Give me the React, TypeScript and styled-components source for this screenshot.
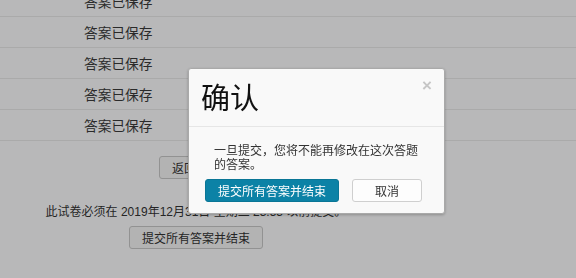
import React from "react";
import styled, { createGlobalStyle } from "styled-components";

const Global = createGlobalStyle`
  html, body { margin: 0; padding: 0; background: #fff; overflow: hidden; }
  body { font-family: "Liberation Sans", "Noto Sans CJK SC", sans-serif; font-size: 12px; color: #333; }
`;

const Page = styled.div`
  width: 576px;
  height: 278px;
  overflow: hidden;
  background: #fdfdfe;
`;

const Summary = styled.div`
  margin-top: -14px;
  display: flex;
  flex-direction: column;
`;

const Row = styled.div`
  height: 31px;
  display: flex;
  align-items: center;
  padding-left: 84px;
  border-bottom: 1px solid #eaeaea;
  box-sizing: border-box;
  font-size: 13.7px;
  color: #3a3a3a;
`;

const Controls = styled.div`
  width: 392px;
  display: flex;
  flex-direction: column;
  align-items: center;
`;

const PageButton = styled.button<{ $top: number }>`
  margin-top: ${(p) => p.$top}px;
  height: 23px;
  padding: 0 12px;
  font: inherit;
  font-size: 12px;
  color: #333;
  background: #f6f6f6;
  border: 1px solid #c8c8c8;
  border-radius: 3px;
`;

const Deadline = styled.div`
  margin-top: 26px;
  line-height: 14px;
  color: #333;
`;

const Backdrop = styled.div`
  position: fixed;
  inset: 0;
  background: rgba(0, 0, 0, 0.27);
`;

const Modal = styled.div`
  position: fixed;
  left: 188px;
  top: 68px;
  width: 257px;
  box-sizing: border-box;
  background: #f9f9f9;
  border: 1px solid #a9a9a9;
  border-radius: 3px;
  box-shadow: 0 1px 3px rgba(0, 0, 0, 0.25);
  display: flex;
  flex-direction: column;
`;

const Header = styled.div`
  height: 58px;
  box-sizing: border-box;
  border-bottom: 1px solid #e6e6e6;
  display: flex;
  justify-content: space-between;
  align-items: flex-start;
  padding: 0 12px 0 12px;
`;

const Title = styled.h3`
  margin: 10px 0 0;
  font-family: "Noto Sans CJK SC", sans-serif;
  font-weight: 400;
  font-size: 29px;
  line-height: 34px;
  color: #111;
`;

const Close = styled.span`
  margin-top: 7px;
  font-family: "Liberation Sans", sans-serif;
  font-weight: 700;
  font-size: 17px;
  line-height: 20px;
  color: #c6c6c6;
`;

const Body = styled.p`
  margin: 0;
  padding: 17px 25px 0 25px;
  line-height: 14px;
  color: #333;
`;

const Footer = styled.div`
  display: flex;
  gap: 13px;
  padding: 7px 0 11px 16px;
`;

const ModalButton = styled.button<{ $primary?: boolean; $pad: number }>`
  height: 23px;
  padding: 0 ${(p) => p.$pad}px;
  font: inherit;
  font-size: 12px;
  border-radius: 3px;
  color: ${(p) => (p.$primary ? "#fff" : "#333")};
  background: ${(p) => (p.$primary ? "#0c82a6" : "#fdfdfd")};
  border: 1px solid ${(p) => (p.$primary ? "#0a7696" : "#cfcfcf")};
`;

const rows = Array.from({ length: 5 });

export default function App() {
  return (
    <Page>
      <Global />
      <Summary>
        {rows.map((_, i) => (
          <Row key={i}>答案已保存</Row>
        ))}
      </Summary>
      <Controls>
        <PageButton $top={15}>返回答题</PageButton>
        <Deadline>此试卷必须在 2019年12月31日 星期二 23:55 以前提交。</Deadline>
        <PageButton $top={7}>提交所有答案并结束</PageButton>
      </Controls>
      <Backdrop />
      <Modal>
        <Header>
          <Title>确认</Title>
          <Close>×</Close>
        </Header>
        <Body>一旦提交，您将不能再修改在这次答题的答案。</Body>
        <Footer>
          <ModalButton $primary $pad={12}>提交所有答案并结束</ModalButton>
          <ModalButton $pad={22}>取消</ModalButton>
        </Footer>
      </Modal>
    </Page>
  );
}
